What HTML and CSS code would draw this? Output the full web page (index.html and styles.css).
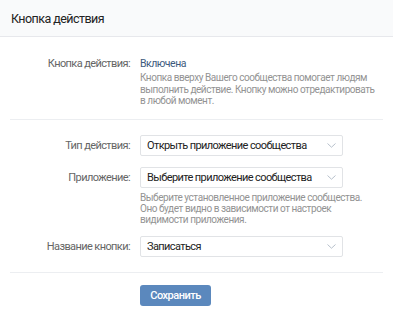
FILE: index.html
```html
<!DOCTYPE html>
<html lang="ru">
<head>
<meta charset="utf-8">
<link rel="stylesheet" href="styles.css">
</head>
<body>
<div class="page">
  <div class="header">Кнопка действия</div>
  <div class="section">
    <div class="row">
      <div class="label top">Кнопка действия:</div>
      <div class="field">
        <div class="value">Включена</div>
        <div class="desc">Кнопка вверху Вашего сообщества помогает людям выполнить действие. Кнопку можно отредактировать в любой момент.</div>
      </div>
    </div>
  </div>
  <div class="sep"></div>
  <div class="section2">
    <div class="row">
      <div class="label">Тип действия:</div>
      <div class="field">
        <div class="select"><span>Открыть приложение сообщества</span><svg class="chev" width="9" height="5" viewBox="0 0 9 5"><path d="M0.5 0.5 L4.5 4.2 L8.5 0.5" fill="none" stroke="#b7c0cc" stroke-width="1"/></svg></div>
      </div>
    </div>
    <div class="row">
      <div class="label">Приложение:</div>
      <div class="field">
        <div class="select"><span>Выберите приложение сообщества</span><svg class="chev" width="9" height="5" viewBox="0 0 9 5"><path d="M0.5 0.5 L4.5 4.2 L8.5 0.5" fill="none" stroke="#b7c0cc" stroke-width="1"/></svg></div>
        <div class="help">Выберите установленное приложение сообщества. Оно будет видно в зависимости от настроек видимости приложения.</div>
      </div>
    </div>
    <div class="row">
      <div class="label">Название кнопки:</div>
      <div class="field">
        <div class="select"><span>Записаться</span><svg class="chev" width="9" height="5" viewBox="0 0 9 5"><path d="M0.5 0.5 L4.5 4.2 L8.5 0.5" fill="none" stroke="#b7c0cc" stroke-width="1"/></svg></div>
      </div>
    </div>
  </div>
  <div class="sep sep2"></div>
  <div class="actions">
    <button class="btn">Сохранить</button>
  </div>
</div>
</body>
</html>
```
FILE: styles.css
```css
html, body {
  margin: 0;
  padding: 0;
  background: #ffffff;
}
body {
  font-family: Roboto, "Noto Sans", sans-serif;
  color: #222222;
  width: 393px;
  height: 320px;
  overflow: hidden;
}
.header {
  height: 37px;
  box-sizing: border-box;
  display: flex;
  align-items: center;
  padding-left: 11px;
  background: #f9fafb;
  border-bottom: 1px solid #e7e8ec;
  font-size: 12.5px;
  letter-spacing: -0.55px;
  color: #222222;
}
.section {
  padding-top: 20px;
}
.row {
  display: grid;
  grid-template-columns: 130px 203px;
  column-gap: 10px;
  align-items: start;
}
.label {
  text-align: right;
  font-size: 11px;
  letter-spacing: -0.6px;
  color: #656565;
  height: 21px;
  line-height: 21px;
  white-space: nowrap;
}
.label.top {
  height: 14px;
  line-height: 14px;
}
.value {
  font-size: 10.5px;
  letter-spacing: -0.5px;
  line-height: 14px;
  color: #3d5a7d;
}
.desc, .help {
  font-size: 10px;
  letter-spacing: -0.45px;
  line-height: 11.7px;
  color: #939393;
  width: 240px;
  margin-top: 1px;
}
.help {
  margin-top: 4px;
  line-height: 11px;
}
.sep {
  height: 1px;
  background: #eceef1;
  margin: 12px 10px 0 10px;
}
.section2 {
  padding-top: 15px;
  display: flex;
  flex-direction: column;
  gap: 11px;
}
.select {
  height: 21px;
  box-sizing: border-box;
  border: 1px solid #e1e3e6;
  border-radius: 2px;
  display: flex;
  align-items: center;
  justify-content: space-between;
  padding: 0 6px 0 6px;
  font-size: 11px;
  letter-spacing: -0.6px;
  color: #222222;
  white-space: nowrap;
}
.sep2 {
  margin-top: 15px;
}
.actions {
  padding: 12px 0 0 140px;
}
.btn {
  display: block;
  width: 71px;
  height: 21px;
  border: none;
  border-radius: 3px;
  background: #5b88bd;
  color: #ffffff;
  font-family: Roboto, "Noto Sans", sans-serif;
  font-size: 11px;
  font-weight: 500;
  letter-spacing: -0.5px;
  padding: 0;
}
```
